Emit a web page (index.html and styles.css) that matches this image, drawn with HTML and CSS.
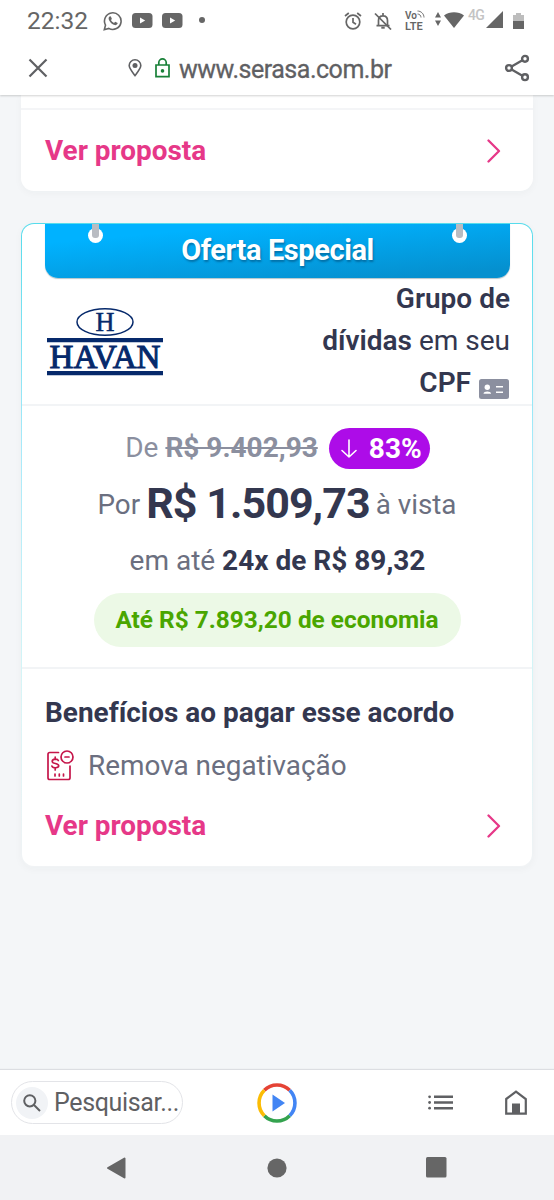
FILE: index.html
```html
<!DOCTYPE html>
<html lang="pt-BR">
<head>
<meta charset="utf-8">
<title>Serasa</title>
<link rel="stylesheet" href="styles.css">
</head>
<body>
<div class="phone">
  <div class="top">
    <div class="status">
      <span class="clock">22:32</span>
      <svg class="ic-wa" width="20" height="20" viewBox="0 0 20 20"><path d="M1.3 18.7l1.2-4.6a8.3 8.3 0 1 1 3.3 3.3z" fill="none" stroke="#666" stroke-width="1.6"/><path d="M6.9 5.2c-1.300.7-1.700 2.100-.8 4 1.200 2.500 3.400 4.400 5.700 4.900 1.400.200 2.600-.6 2.900-2.100l-2.500-1.300-1.200 1.200c-1.400-.5-2.400-1.500-3-2.800l.9-1.200-1-2.500z" fill="#666"/></svg>
      <svg class="ic-yt" width="21" height="15" viewBox="0 0 21 15"><rect width="20.500" height="15" rx="3.500" fill="#666"/><path d="M8 4.500v6l5.200-3z" fill="#fff"/></svg>
      <svg class="ic-yt2" width="21" height="15" viewBox="0 0 21 15"><rect width="20.500" height="15" rx="3.500" fill="#666"/><path d="M8 4.500v6l5.200-3z" fill="#fff"/></svg>
      <span class="dot"></span>
      <span class="grow"></span>
      <svg width="18" height="18" viewBox="0 0 18 18" fill="none" stroke="#666" stroke-width="1.700"><circle cx="9" cy="10" r="6.800"/><path d="M1 4l3.800-3M17 4l-3.800-3M9 6v4.300l3 1.900"/></svg>
      <svg class="ic-bell" width="18" height="18" viewBox="0 0 18 18" fill="none" stroke="#666" stroke-width="1.700"><path d="M4.500 13V8.500c0-2.800 1.800-4.700 4.500-4.700s4.500 1.900 4.500 4.700V13M2.500 13.700h13M9 1v3"/><path d="M7.300 15.700h3.400" stroke-width="2"/><path d="M1 1.500l16 16"/></svg>
      <div class="volte"><span class="vo">Vo<svg width="8" height="8" viewBox="0 0 8 8" fill="none" stroke="#777" stroke-width="1"><path d="M.5 1c3.600 0 6.500 2.900 6.500 6.500M.5 4c2 0 3.500 1.500 3.500 3.500"/></svg></span><span>LTE</span></div>
      <svg class="ic-ud" width="6" height="14" viewBox="0 0 6 14" fill="#666"><path d="M3 0l3 5.600H0zM3 14l3-5.600H0z"/></svg>
      <svg class="ic-wifi" width="20" height="16" viewBox="0 0 20 16" fill="#666"><path d="M0 3.500C5.500-.7 14.500-.7 20 3.500L10 16z"/></svg>
      <span class="g4">4G</span>
      <svg class="ic-sig" width="17" height="17" viewBox="0 0 17 17" fill="#666"><path d="M17 0v17H0z"/></svg>
      <svg class="ic-bat" width="11" height="16" viewBox="0 0 11 16"><path d="M0 2h3V0h5v2h3v6H0z" fill="#bdbdbd"/><path d="M0 8h11v8H0z" fill="#666"/></svg>
    </div>
    <div class="urlbar">
      <svg width="20" height="20" viewBox="0 0 20 20" stroke="#5f6063" stroke-width="2.200"><path d="M1.500 1.500l17 17M18.500 1.500l-17 17"/></svg>
      <svg class="ic-pin" width="14" height="18" viewBox="0 0 14 18"><path d="M7 16.600C3.600 12.300 1.200 9.500 1.200 6.600a5.800 5.800 0 0 1 11.600 0C12.800 9.500 10.400 12.300 7 16.600z" fill="none" stroke="#5f6063" stroke-width="1.600"/><circle cx="7" cy="6.600" r="2.500" fill="#5f6063"/></svg>
      <svg class="ic-lock" width="15" height="20" viewBox="0 0 15 20"><path d="M1 7h13v11.700H1zM3.800 7V4.600a3.700 3.700 0 0 1 7.400 0V7" fill="none" stroke="#188038" stroke-width="1.700"/><circle cx="7.500" cy="12.900" r="1.800" fill="#188038"/></svg>
      <span class="url">www.serasa.com.br</span>
      <span class="grow"></span>
      <svg width="26" height="28" viewBox="0 0 26 28" fill="none" stroke="#5f6063" stroke-width="2.400"><circle cx="5" cy="14" r="2.900"/><circle cx="21" cy="4.800" r="2.900"/><circle cx="21" cy="23.200" r="2.900"/><path d="M7.600 12.500l10.800-6.200M7.600 15.500l10.800 6.200"/></svg>
    </div>
  </div>

  <main class="page">
    <section class="card card-prev">
      <div class="link"><span>Ver proposta</span><svg width="14" height="24" viewBox="0 0 14 24"><path d="M1.500 1.500L12 12 1.500 22.500" fill="none" stroke="#e63888" stroke-width="2.300" stroke-linecap="round" stroke-linejoin="round"/></svg></div>
    </section>

    <section class="card offer">
      <div class="banner">
        <i class="pin pin-l"></i><span>Oferta Especial</span><i class="pin pin-r"></i>
      </div>
      <div class="head">
        <svg class="havan" width="120" height="74" viewBox="0 0 120 74" fill="#06296b"><ellipse cx="58" cy="14" rx="28" ry="13.300" fill="none" stroke="#06296b" stroke-width="1.500"/><text x="48.500" y="23" font-size="27" stroke="#06296b" stroke-width=".5" textLength="19" lengthAdjust="spacingAndGlyphs">H</text><path d="M0 30h116v4.300H0zM0 63h116v4.300H0z"/><text x="2.500" y="60" font-size="34" stroke="#06296b" stroke-width="1.100" textLength="111" lengthAdjust="spacingAndGlyphs">HAVAN</text></svg>
        <div class="group"><div><b>Grupo de</b></div><div><b>dívidas</b> em seu</div><div class="cpf"><b>CPF</b><svg width="30" height="20" viewBox="0 0 30 20"><rect width="30" height="20" rx="2.500" fill="#8b8f9f"/><circle cx="8.300" cy="8.200" r="2.700" fill="#fff"/><path d="M4.500 14.800c0-3 7.600-3 7.600 0zM17 7h7v1.600h-7zM17 12.500h7v1.600h-7z" fill="#fff"/></svg></div></div>
      </div>
      <div class="prices">
        <div class="old"><span>De <b><s>R$ 9.402,93</s></b></span><span class="pct"><svg width="18" height="20" viewBox="0 0 18 20" fill="none" stroke="#fff" stroke-width="1.600" stroke-linecap="round" stroke-linejoin="round"><path d="M9 1v17M2 11.500L9 18l7-6.500"/></svg><b>83%</b></span></div>
        <div class="new"><span>Por</span><b>R$ 1.509,73</b><span>à vista</span></div>
        <div class="parc">em até <b>24x de R$ 89,32</b></div>
        <div class="eco">Até R$ 7.893,20 de economia</div>
      </div>
      <div class="benefits">
        <h2>Benefícios ao pagar esse acordo</h2>
        <div class="benefit"><svg width="30" height="32" viewBox="0 0 30 32" fill="none" stroke="#c5164a" stroke-width="1.700" stroke-linecap="round"><path d="M13.500 3.500H4.800A1.800 1.800 0 0 0 3 5.300v23.400a1.800 1.800 0 0 0 1.800 1.800h18.400a1.800 1.800 0 0 0 1.800-1.800V17"/><circle cx="22" cy="8" r="6"/><path d="M20 8h4M10 25v2M14.300 25v2M18.500 25v2"/><path d="M13.300 11.500c-.7-2-6.100-1.800-6.100.9 0 2.900 6.500 1.300 6.500 4.400 0 2.500-6 2.700-6.800.200M10.200 8.200v2.200M10.200 18.800v2.200"/></svg><span>Remova negativação</span></div>
        <div class="link"><span>Ver proposta</span><svg width="14" height="24" viewBox="0 0 14 24"><path d="M1.500 1.500L12 12 1.500 22.500" fill="none" stroke="#e63888" stroke-width="2.300" stroke-linecap="round" stroke-linejoin="round"/></svg></div>
      </div>
    </section>
  </main>

  <div class="toolbar">
    <div class="search"><span class="lens"><svg width="18" height="18" viewBox="0 0 18 18" fill="none" stroke="#5f6063" stroke-width="2"><circle cx="6.800" cy="6.800" r="5.600"/><path d="M11 11l6 6"/></svg></span><span>Pesquisar...</span></div>
    <svg class="ic-play" width="40" height="40" viewBox="0 0 40 40" fill="none" stroke-width="3.600"><path d="M7.300 7.300a18 18 0 0 1 25.400 0" stroke="#e54335"/><path d="M32.700 7.300a18 18 0 0 1 0 25.400" stroke="#4285f4"/><path d="M32.700 32.700a18 18 0 0 1-25.400 0" stroke="#34a34f"/><path d="M7.300 32.700a18 18 0 0 1 0-25.400" stroke="#fbbc05"/><path d="M15.500 11.500v17L28 20z" fill="#4285f4"/></svg>
    <svg class="ic-list" width="25" height="15" viewBox="0 0 25 15" fill="#5f6063"><path d="M6 .5h19v2.600H6zM6 6.200h19v2.600H6zM6 11.900h19v2.600H6z"/><circle cx="1.600" cy="1.800" r="1.400"/><circle cx="1.600" cy="7.500" r="1.400"/><circle cx="1.600" cy="13.200" r="1.400"/></svg>
    <svg class="ic-home" width="22" height="25" viewBox="0 0 22 25"><path d="M1.200 9L11 1.700 20.800 9v14.700H1.200z" fill="none" stroke="#5f6063" stroke-width="2.200"/><path d="M7 13.500h8V24H7z" fill="#5f6063"/></svg>
  </div>
  <div class="nav">
    <svg width="20" height="22" viewBox="0 0 20 22"><path d="M18.500 1.500v19L2 11z" fill="#666" stroke="#666" stroke-width="2" stroke-linejoin="round"/></svg>
    <svg class="nav-home" width="20" height="20" viewBox="0 0 20 20"><circle cx="10" cy="10" r="9.600" fill="#666"/></svg>
    <svg class="nav-recent" width="21" height="21" viewBox="0 0 21 21"><rect width="20.500" height="20.500" rx="1.500" fill="#666"/></svg>
  </div>
</div>
</body>
</html>
```

FILE: styles.css
```css
* { box-sizing: border-box; }
body { margin: 0; font-family: Roboto, sans-serif; }
svg { display: block; flex: none; }
b { font-weight: 700; }
.grow { flex: 1; }
.phone { width: 554px; height: 1200px; display: flex; flex-direction: column; overflow: hidden; background: #f4f6f8; white-space: nowrap; }

.top { height: 95px; flex: none; background: #fff; box-shadow: 0 1px 2px rgba(0,0,0,.18); z-index: 1; }
.status { height: 40px; display: flex; align-items: center; padding: 1px 30px 0 27px; color: #666; }
.clock { font-size: 24.5px; width: 62px; }
.ic-wa { margin-left: 14px; }
.ic-yt { margin: 0 0 1px 9px; }
.ic-yt2 { margin: 0 0 1px 9px; }
.dot { width: 6px; height: 6px; border-radius: 50%; background: #666; margin: 0 0 1px 16px; }
.ic-bell { margin-left: 12px; }
.volte { margin-left: 13px; width: 22px; display: flex; flex-direction: column; font-size: 11px; line-height: 11px; font-weight: 600; }
.vo { display: flex; gap: 0; font-size: 10px; }
.ic-ud { margin: 0 3px 3px 8px; }
.ic-wifi { margin-bottom: 1px; }
.g4 { width: 18px; margin: 0 0 12px 4px; font-size: 14px; font-weight: 500; letter-spacing: -.8px; color: #c4c4c4; }
.ic-sig { margin: 0 10px 3px 0; }

.urlbar { height: 55px; display: flex; align-items: center; padding: 0 24px 0 28px; }
.ic-pin { margin-left: 80px; }
.ic-lock { margin-left: 13px; }
.url { margin: 3px 0 0 9px; font-size: 25px; letter-spacing: -.48px; color: #5f6063; -webkit-text-stroke: .3px #5f6063; }

.page { flex: 1; padding: 0 21px; }
.card { background: #fff; border-radius: 13px; box-shadow: 0 2px 8px rgba(40,50,70,.035); }
.card-prev { height: 96px; border-radius: 0 0 13px 13px; margin-bottom: 32px; padding-top: 13px; }
.card-prev .link { height: 83px; border-top: 2px solid #f4f5f7; }
.link { display: flex; align-items: center; justify-content: space-between; padding: 0 32px 0 24px; color: #e63888; font-size: 27.9px; font-weight: 700; }
.offer { height: 644px; border: 1px solid transparent; background: linear-gradient(#fff,#fff) padding-box, linear-gradient(#55dcec 0%, #a8eafa 35%, #d5f5f7 70%, #f1f3f5 100%) border-box; }
.banner { height: 54px; margin: 0 22px 1px 23px; padding-bottom: 2px; border-radius: 0 0 13px 13px; background: linear-gradient(175deg, #00b2ff 20%, #0590cf 90%); box-shadow: 0 1px 1px rgba(0,60,80,.3); color: #fff; display: flex; justify-content: center; align-items: center; position: relative; font-size: 29px; font-weight: 700; letter-spacing: -.4px; text-shadow: 1px 2px 2px rgba(0,60,100,.45); }
.pin { position: absolute; top: 4px; width: 15px; height: 15px; border-radius: 50%; background: #fff; }
.pin::before { content: ""; position: absolute; left: 4px; top: -4px; width: 7px; height: 14px; border-radius: 0 0 3px 3px; background: #b9bcc2; }
.pin-l { left: 43px; }
.pin-r { right: 43px; }
.head { height: 127px; border-bottom: 2px solid #f2f4f6; padding: 0 22px 0 25px; display: flex; justify-content: space-between; color: #33374f; }
.havan { margin-top: 29px; font-family: "Liberation Serif", serif; overflow: visible; }
.group { font-size: 28px; line-height: 42px; text-align: right; margin-top: -1px; }
.group b { font-weight: 600; }
.cpf { display: flex; justify-content: flex-end; gap: 8px; padding-right: 1px; }
.cpf svg { margin-top: 17px; }
.prices { height: 263px; border-bottom: 2px solid #f2f4f6; padding-top: 22px; display: flex; flex-direction: column; align-items: center; font-size: 28px; color: #6b6f80; }
.old { height: 41px; display: flex; align-items: center; gap: 11px; color: #8b8f9f; padding-left: 1px; }
.old > span:first-child { margin-top: -2px; }
.old s { text-decoration-thickness: 2px; }
.pct { width: 101px; height: 41px; border-radius: 21px; background: #ad0ce8; color: #fff; display: flex; align-items: center; justify-content: center; gap: 11px; padding-left: 3px; }
.new { height: 68px; display: flex; align-items: baseline; gap: 6px; line-height: 68px; }
.new b { font-size: 43px; letter-spacing: -.95px; color: #33374f; }
.new span { font-size: 27.8px; position: relative; top: -4px; }
.parc { height: 56px; line-height: 47px; padding-left: 1px; }
.parc b { color: #33374f; }
.eco { width: 367px; height: 54px; line-height: 53px; border-radius: 27px; background: #ecf9e6; color: #4aa600; font-weight: 700; font-size: 24.4px; text-align: center; }
.benefits h2 { margin: 0; padding: 27px 0 0 23px; font-size: 27.95px; line-height: 33px; font-weight: 700; color: #33374f; }
.benefit { height: 60px; margin-top: 6px; padding-left: 23px; display: flex; align-items: center; gap: 13px; color: #6b6f80; font-size: 27.9px; }
.benefits .link { height: 61px; padding: 0 31px 0 23px; }

.toolbar { height: 65px; flex: none; display: flex; align-items: center; background: #fff; box-shadow: 0 -1px 1px #dcdee2; padding-left: 11px; }
.search { width: 172px; height: 43px; border: 1px solid #e3e4e8; border-radius: 22px; display: flex; align-items: center; padding-left: 4px; gap: 6px; font-size: 25px; letter-spacing: -.35px; color: #5f6063; }
.lens { width: 32px; height: 32px; border-radius: 50%; background: #f1f3f6; display: flex; align-items: center; justify-content: center; flex: none; }
.ic-play { margin-left: 74px; }
.ic-list { margin-left: 131px; }
.ic-home { margin-left: 52px; }
.nav { height: 65px; flex: none; background: #f1f2f4; display: flex; align-items: center; padding-left: 106px; }
.nav-home { margin-left: 141px; }
.nav-recent { margin-left: 139px; }
```
